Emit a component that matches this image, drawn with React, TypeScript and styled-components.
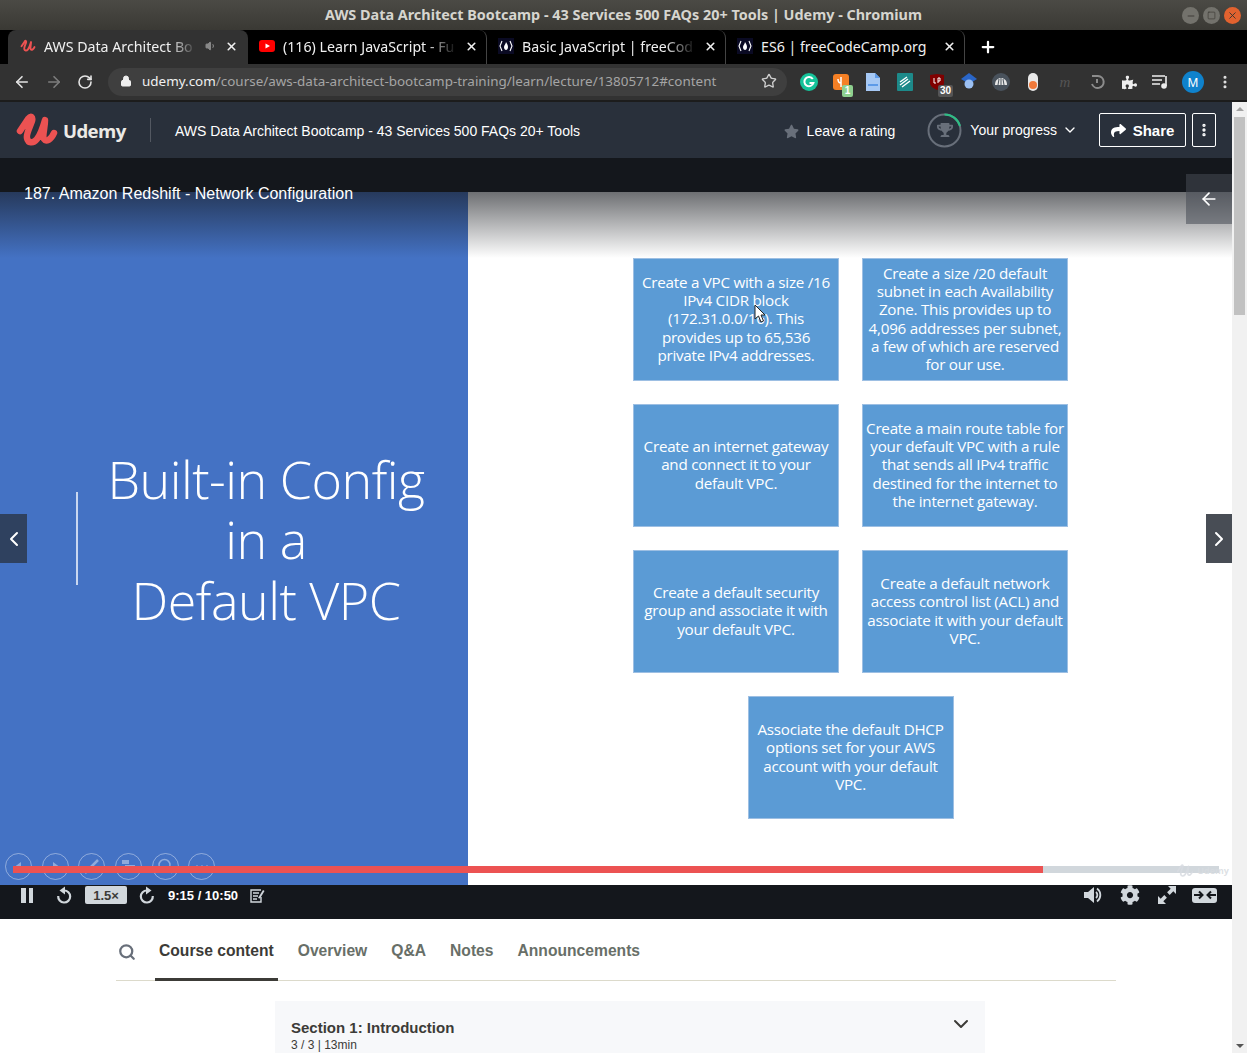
import React from 'react';
import styled, { createGlobalStyle } from 'styled-components';
import {
  ArrowLeft,
  ArrowRight,
  ChevronDown,
  ChevronLeft,
  ChevronRight,
  Lock,
  Minus,
  MoreVertical,
  Plus,
  RotateCw,
  Search,
  Square,
  Star,
  Volume1,
  X,
} from 'lucide-react';
import { FaCog, FaPuzzlePiece, FaShare, FaStar, FaTrophy } from 'react-icons/fa';

const GlobalStyle = createGlobalStyle`
  html, body {
    margin: 0;
    padding: 0;
    height: 1053px;
    overflow: hidden;
    background: #fff;
    font-family: "Liberation Sans", Arial, sans-serif;
  }
  * { box-sizing: border-box; }
`;

const Window = styled.div`
  display: flex;
  flex-direction: column;
  width: 1247px;
  height: 1053px;
  overflow: hidden;
`;

const TitleBar = styled.div`
  position: relative;
  display: flex;
  justify-content: center;
  align-items: center;
  height: 30px;
  flex: none;
  padding-bottom: 2px;
  background: linear-gradient(#4b4a45, #3a3934);
  color: #d6d5cf;
  font: 700 14.4px "Noto Sans", sans-serif;
`;

const WindowButtons = styled.div`
  position: absolute;
  top: 7px;
  right: 6px;
  display: flex;
  gap: 4px;
`;

const WindowButton = styled.div<{ $close?: boolean }>`
  display: flex;
  align-items: center;
  justify-content: center;
  width: 17px;
  height: 17px;
  border-radius: 50%;
  background: ${(p) => (p.$close ? '#e2622f' : '#73726c')};
  color: #35342f;
`;

const TabStrip = styled.div`
  display: flex;
  align-items: stretch;
  height: 34px;
  flex: none;
  padding-left: 8px;
  background: #000;
`;

const Tab = styled.div<{ $active?: boolean; $sep?: boolean }>`
  display: flex;
  align-items: center;
  width: ${(p) => (p.$active ? 240 : 239)}px;
  padding: 0 ${(p) => (p.$active ? 10 : 8)}px 2px ${(p) => (p.$active ? 12 : 11)}px;
  gap: 8px;
  border-radius: 8px 8px 0 0;
  background: ${(p) => (p.$active ? '#323232' : 'transparent')};
  color: #f0f0f0;
  font: 14.2px "Noto Sans", sans-serif;
  ${(p) => p.$sep && 'border-right: 1px solid #444;'}
`;

const TabIcon = styled.span`
  display: flex;
  align-items: center;
  justify-content: center;
  flex: none;
  width: 16px;
  height: 16px;
`;

const TabLabel = styled.span<{ $fade?: boolean }>`
  flex: 1;
  white-space: nowrap;
  ${(p) => p.$fade && 'mask-image: linear-gradient(to right, #000 82%, transparent 100%);'}
`;

const NewTab = styled.div`
  display: flex;
  align-items: center;
  padding-left: 14px;
  color: #fff;
`;

const Toolbar = styled.div`
  display: flex;
  align-items: center;
  height: 36px;
  flex: none;
  padding: 0 0 0 13px;
  background: #323232;
  color: #e4e4e4;
`;

const NavButtons = styled.div`
  display: flex;
  align-items: center;
  gap: 14px;
  width: 95px;
`;

const Omnibox = styled.div`
  display: flex;
  align-items: center;
  width: 679px;
  height: 28px;
  padding: 0 10px 2px 12px;
  border-radius: 14px;
  background: #3f3f3f;
  font: 13.45px "Noto Sans", sans-serif;
  color: #f0f0f0;
`;

const UrlText = styled.div`
  flex: 1;
  margin-left: 10px;
  white-space: nowrap;
  span { color: #a5a5a5; }
`;

const Extensions = styled.div`
  display: flex;
  align-items: center;
  margin-left: 6px;
`;

const Ext = styled.div`
  position: relative;
  display: flex;
  align-items: center;
  justify-content: center;
  width: 32px;
  height: 32px;
`;

const ExtBadge = styled.span<{ $dark?: boolean }>`
  position: absolute;
  right: ${(p) => (p.$dark ? 0 : 4)}px;
  bottom: 1px;
  padding: 0 2px;
  min-width: 11px;
  height: 12px;
  border-radius: 2px;
  background: ${(p) => (p.$dark ? '#555' : '#8ed08f')};
  color: #fff;
  font: 700 10px/12px "Liberation Sans", sans-serif;
  text-align: center;
`;

const DimLetter = styled.span`
  color: #555;
  font: italic 15px "Liberation Serif", serif;
`;

const Avatar = styled.div`
  display: flex;
  align-items: center;
  justify-content: center;
  width: 22px;
  height: 22px;
  border-radius: 50%;
  background: #0f82cc;
  color: #fff;
  font: 12px "Noto Sans", sans-serif;
`;

const Viewport = styled.div`
  display: flex;
  flex: 1;
  min-height: 0;
  border-top: 2px solid #1c1c1c;
`;

const Page = styled.div`
  display: flex;
  flex-direction: column;
  flex: 1;
  min-width: 0;
  background: #fff;
`;

const Scrollbar = styled.div`
  display: flex;
  flex-direction: column;
  align-items: center;
  width: 15px;
  flex: none;
  background: #f1f1f1;
`;

const ScrollArrow = styled.div<{ $down?: boolean }>`
  width: 0;
  height: 0;
  margin: 5px 0;
  border-left: 4px solid transparent;
  border-right: 4px solid transparent;
  ${(p) => (p.$down ? 'border-top: 4px solid #555;' : 'border-bottom: 4px solid #a3a3a3;')}
`;

const ScrollThumb = styled.div`
  width: 11px;
  height: 198px;
  margin-top: 1px;
  background: #c1c1c1;
`;

const ScrollSpace = styled.div`
  flex: 1;
`;

const CourseHeader = styled.header`
  display: flex;
  align-items: center;
  height: 56px;
  flex: none;
  padding: 0 16px;
  background: #29303b;
  color: #fff;
  font-size: 14px;
`;

const LogoLink = styled.div`
  display: flex;
  align-items: center;
  gap: 5px;
  width: 135px;
  height: 24px;
  border-right: 1px solid #535861;
`;

const LogoText = styled.span`
  color: #eceae6;
  font: 700 18.6px "Open Sans", sans-serif;
  letter-spacing: -0.6px;
`;

const CourseTitle = styled.div`
  flex: 1;
  margin: 2px 0 0 24px;
`;

const RatingLink = styled.div`
  display: flex;
  align-items: center;
  gap: 8px;
  margin: 2px 32px 0 0;
`;

const ProgressLink = styled.div`
  display: flex;
  align-items: center;
  gap: 8px;
  margin-right: 21px;
`;

const ProgressRing = styled.div`
  position: relative;
  display: flex;
  align-items: center;
  justify-content: center;
  width: 35px;
  height: 35px;
  color: #686f7a;
  svg.ring { position: absolute; inset: 0; }
`;

const Caret = styled.span`
  display: flex;
  margin-left: -3px;
`;

const OutlineButton = styled.div<{ $square?: boolean }>`
  display: flex;
  align-items: center;
  justify-content: center;
  gap: 7px;
  width: ${(p) => (p.$square ? 24 : 87)}px;
  height: 34px;
  margin-left: ${(p) => (p.$square ? 6 : 0)}px;
  border: 1px solid #fff;
  border-radius: 2px;
  font-weight: 700;
  font-size: 15px;
`;

const VideoTop = styled.div`
  height: 34px;
  flex: none;
  background: #14171c;
`;

const Stage = styled.div`
  position: relative;
  display: grid;
  grid-template-columns: 468px 1fr;
  height: 693px;
  flex: none;
`;

const BluePanel = styled.div`
  display: flex;
  align-items: center;
  padding-left: 76px;
  background: #4472c4;
  color: #fff;
`;

const PanelRule = styled.div`
  flex: none;
  width: 2px;
  height: 93px;
  background: #c9d7f0;
`;

const PanelHeading = styled.div`
  flex: 1;
  margin-top: 2px;
  padding-right: 14px;
  text-align: center;
  white-space: nowrap;
  font: 300 52px/60.5px "Open Sans", sans-serif;
  letter-spacing: -0.5px;
`;

const Boxes = styled.div`
  display: grid;
  grid-template-columns: 206px 206px;
  grid-auto-rows: 123px;
  gap: 23px;
  align-content: start;
  padding: 66px 0 0 165px;
  background: #fff;
`;

const Box = styled.div<{ $wide?: boolean }>`
  display: flex;
  align-items: center;
  justify-content: center;
  padding-bottom: 2px;
  ${(p) => p.$wide && 'grid-column: 1 / span 2; justify-self: center; width: 206px;'}
  border: 1px solid #9dbfe3;
  background: #5b9bd5;
  color: #fff;
  text-align: center;
  white-space: pre-line;
  font: 15.2px/18.3px "Open Sans", sans-serif;
  letter-spacing: -0.25px;
`;

const TopShade = styled.div`
  position: absolute;
  top: 0;
  left: 0;
  right: 0;
  height: 66px;
  padding: 0 24px;
  background: linear-gradient(rgba(20, 23, 28, 0.62), rgba(20, 23, 28, 0));
  color: #fff;
  font-size: 16px;
`;

const LectureTitle = styled.div`
  margin-top: -8px;
  padding-top: 1px;
`;

const BackPanel = styled.div`
  position: absolute;
  top: -18px;
  right: 0;
  display: flex;
  align-items: center;
  justify-content: center;
  width: 46px;
  height: 50px;
  background: rgba(70, 75, 84, 0.55);
  color: #fff;
`;

const SideArrow = styled.div<{ $right?: boolean }>`
  position: absolute;
  top: 322px;
  ${(p) => (p.$right ? 'right: 0; background: #484d55;' : 'left: 0; background: #2f415f;')}
  display: flex;
  align-items: center;
  justify-content: center;
  width: ${(p) => (p.$right ? 26 : 27)}px;
  height: 49px;
  color: #fff;
`;

const SlideControls = styled.div`
  position: absolute;
  left: 5px;
  bottom: 5px;
  display: flex;
  gap: 9.7px;
`;

const SlideControl = styled.div`
  display: flex;
  align-items: center;
  justify-content: center;
  width: 27px;
  height: 27px;
  border: 1px solid rgba(255, 255, 255, 0.4);
  border-radius: 50%;
`;

const Track = styled.div`
  position: absolute;
  left: 13px;
  right: 13px;
  bottom: 12px;
  height: 7px;
  background: #d1d7dc;
`;

const TrackFill = styled.div`
  height: 100%;
  background: #ec5252;
`;

const Watermark = styled.div`
  position: absolute;
  right: 3px;
  bottom: 7px;
  display: flex;
  align-items: center;
  gap: 3px;
  color: rgba(215, 219, 224, 0.85);
  font: 700 9px "Open Sans", sans-serif;
`;

const Cursor = styled.svg`
  position: absolute;
  left: 754px;
  top: 112px;
`;

const ControlBar = styled.div`
  display: flex;
  align-items: center;
  height: 34px;
  flex: none;
  padding: 0 15px 14px 21px;
  background: #14171c;
  color: #d1d7dc;
`;

const PauseBars = styled.div`
  display: flex;
  justify-content: space-between;
  width: 12px;
  height: 15px;
  margin-right: 22px;
  &::before, &::after {
    content: '';
    width: 4.5px;
    background: #d1d7dc;
  }
`;

const RateBox = styled.div`
  display: flex;
  align-items: center;
  justify-content: center;
  width: 42px;
  height: 18px;
  margin: 0 11px 0 12px;
  border-radius: 2px;
  background: #d1d7dc;
  color: #3c3b37;
  font-weight: 700;
  font-size: 13px;
`;

const TimeText = styled.div`
  margin: 0 12px;
  color: #fff;
  font-weight: 700;
  font-size: 13px;
`;

const ControlSpacer = styled.div`
  flex: 1;
`;

const RightControls = styled.div`
  display: flex;
  align-items: center;
  gap: 17px;
`;

const TheatreBox = styled.div`
  display: flex;
  align-items: center;
  justify-content: center;
  width: 25px;
  height: 15px;
  margin-left: -2px;
  border-radius: 3px;
  background: #d1d7dc;
`;

const TabsRow = styled.nav`
  display: flex;
  align-items: stretch;
  height: 62px;
  flex: none;
  margin: 0 116px;
  border-bottom: 1px solid #dcdacb;
`;

const SearchSlot = styled.div`
  display: flex;
  align-items: center;
  width: 39px;
  padding: 4px 0 0 2px;
  color: #686f7a;
`;

const ContentTab = styled.div<{ $active?: boolean }>`
  display: flex;
  align-items: center;
  margin: 0 16px -1px 0;
  padding: 5px 4px 0;
  border-bottom: 3px solid ${(p) => (p.$active ? '#3c3b37' : 'transparent')};
  color: ${(p) => (p.$active ? '#3c3b37' : '#686f68')};
  font-weight: 700;
  font-size: 15.65px;
`;

const SectionCard = styled.section`
  display: flex;
  justify-content: space-between;
  width: 710px;
  height: 60px;
  margin: 20px 0 0 275px;
  padding: 18px 12px 0 16px;
  background: #f7f8fa;
  color: #3c3b37;
`;

const SectionName = styled.div`
  font-weight: 700;
  font-size: 15px;
`;

const SectionMeta = styled.div`
  margin-top: 2px;
  font-size: 12px;
`;

const SectionChevron = styled.div`
  margin-top: -7px;
`;

const FreeCodeCampIcon = () => (
  <svg width="16" height="16" viewBox="0 0 16 16">
    <rect width="16" height="16" fill="#0a0a23" />
    <path d="M4 3 2 8l2 5M12 3l2 5-2 5" fill="none" stroke="#fff" strokeWidth="1.1" />
    <path d="M8 4c1 2 2 3 2 5s-1 3-2 3-2-1-2-3 2-3 2-5z" fill="#fff" />
  </svg>
);

const UdemyMark = ({ size = 16, color = '#ec5252', weight = 6.5 }: { size?: number; color?: string; weight?: number }) => (
  <svg width={size} height={size * 0.86} viewBox="0 0 42 36" fill="none">
    <path
      d="M4 19 12 7C15 3 17 5 16 9 14 15 10 22 11 26 12 31 17 32 21 27 25 22 27 15 29 8 29 16 26 24 28 27 30 30 35 28 38 21"
      stroke={color}
      strokeWidth={weight}
      strokeLinecap="round"
      strokeLinejoin="round"
    />
  </svg>
);

const YouTubeIcon = () => (
  <svg width="16" height="16" viewBox="0 0 16 16">
    <rect y="2" width="16" height="12" rx="3" fill="#f00" />
    <path d="M6.5 5.5v5L11 8z" fill="#fff" />
  </svg>
);

const GrammarlyIcon = () => (
  <svg width="18" height="18" viewBox="0 0 18 18">
    <circle cx="9" cy="9" r="9" fill="#15c39a" />
    <path d="M12.8 6a4.6 4.6 0 1 0 .6 4H9.5" fill="none" stroke="#fff" strokeWidth="2" />
  </svg>
);

const OrangeExtIcon = () => (
  <svg width="16" height="16" viewBox="0 0 16 16">
    <rect width="16" height="16" rx="3" fill="#f58025" />
    <path d="M8 3v10M5 5c0 3 1 4 3 4" fill="none" stroke="#fff" strokeWidth="1.5" />
  </svg>
);

const DocIcon = () => (
  <svg width="14" height="18" viewBox="0 0 14 18">
    <path d="M0 0h9l5 5v13H0z" fill="#a6c8f4" />
    <path d="M9 0l5 5H9z" fill="#5d9ae8" />
    <rect x="2" y="11" width="10" height="2" fill="#5d9ae8" />
  </svg>
);

const StackIcon = () => (
  <svg width="16" height="18" viewBox="0 0 16 18">
    <rect width="16" height="18" rx="1" fill="#1d8a8a" />
    <path d="M3 9l7-5M3 12l8-6M5 14l8-6" stroke="#fff" strokeWidth="1.4" />
  </svg>
);

const ShieldIcon = () => (
  <svg width="14" height="16" viewBox="0 0 14 16">
    <path d="M0 1 7 0l7 1v8c0 3-3 5-7 7-4-2-7-4-7-7z" fill="#800000" />
    <path d="M4 4v5h2M8 9V4h2v3H8" fill="none" stroke="#fff" />
  </svg>
);

const CapIcon = () => (
  <svg width="16" height="18" viewBox="0 0 16 18">
    <path d="M8 0l8 6-8 5-8-5z" fill="#2a66c8" />
    <circle cx="8" cy="11" r="4.5" fill="#9cc0f2" />
  </svg>
);

const CloudIcon = () => (
  <svg width="18" height="18" viewBox="0 0 18 18">
    <circle cx="9" cy="9" r="9" fill="#49525c" />
    <path d="M3 12c0-5 3-7 6-7s6 2 6 7z" fill="#e6e6e6" />
    <path d="M6 12 7 6M9 12V5M12 12l-1-6" stroke="#49525c" />
  </svg>
);

const ToggleIcon = () => (
  <svg width="10" height="18" viewBox="0 0 10 18">
    <rect width="10" height="18" rx="5" fill="#e8e8e8" />
    <circle cx="5" cy="12" r="4" fill="#f0793a" />
  </svg>
);

const HistoryIcon = () => (
  <svg width="16" height="16" viewBox="0 0 16 16" fill="none" stroke="#8c8c8c" strokeWidth="2">
    <path d="M3 2h6a6 6 0 1 1-6 8" />
    <path d="M8 5v4" />
  </svg>
);

const MusicListIcon = () => (
  <svg width="18" height="14" viewBox="0 0 18 14" fill="none" stroke="#eee" strokeWidth="1.6">
    <path d="M0 1h13M0 5h10M0 9h8M14 1v10" />
    <circle cx="12" cy="11" r="2" fill="#eee" />
  </svg>
);

const NoteIcon = () => (
  <svg width="15" height="15" viewBox="0 0 15 15" fill="none" stroke="#d1d7dc" strokeWidth="1.4">
    <path d="M11 9v5H1V2h10" />
    <path d="M3 5h6M3 8h5M3 11h4" />
    <path d="M8 10l5-8 1.5 1-4.5 7.5z" fill="#d1d7dc" stroke="none" />
  </svg>
);

const SeekIcon = ({ forward }: { forward?: boolean }) => (
  <svg width="18" height="18" viewBox="0 0 18 18" style={forward ? { transform: 'scaleX(-1)' } : undefined}>
    <path d="M9 4.5A6 6 0 1 1 3.2 10" fill="none" stroke="#d1d7dc" strokeWidth="2.2" />
    <path d="M10 0.5v8L4.5 4.5z" fill="#d1d7dc" />
  </svg>
);

const SpeakerIcon = () => (
  <svg width="20" height="20" viewBox="0 0 20 20" fill="none" stroke="#d1d7dc" strokeWidth="1.8">
    <path d="M1 7h4l6-5v16l-6-5H1z" fill="#d1d7dc" stroke="none" />
    <path d="M13 7a4 4 0 0 1 0 6M14 3.5a8 8 0 0 1 0 13" />
  </svg>
);

const ExpandIcon = () => (
  <svg width="20" height="20" viewBox="0 0 20 20" fill="#d1d7dc">
    <path d="M1 19v-8l2.7 2.7 3.6-3.6 2.6 2.6-3.6 3.6L9 19z" />
    <path d="M19 1v8l-2.7-2.7-3.6 3.6-2.6-2.6 3.6-3.6L11 1z" />
  </svg>
);

const TheatreIcon = () => (
  <svg width="22" height="10" viewBox="0 0 22 10" fill="none" stroke="#14171c" strokeWidth="2">
    <path d="M0 5h8.5M5 1.5 8.5 5 5 8.5M22 5h-8.5M17 1.5 13.5 5 17 8.5" />
  </svg>
);

const ControlGlyph = ({ children }: { children: React.ReactNode }) => (
  <svg width="17" height="17" viewBox="0 0 17 17" fill="rgba(255,255,255,0.4)" stroke="rgba(255,255,255,0.4)">
    {children}
  </svg>
);

const slideControlGlyphs = [
  <path key="prev" d="M11 4v9L5 8.500z" stroke="none" />,
  <path key="next" d="M6 4v9l6-4.500z" stroke="none" />,
  <path key="pen" d="M2 15 15 2" strokeWidth="2.500" />,
  <path key="cards" d="M2 2h7v4H2zM5 7h10v3H5zM5 12h10v3H5z" stroke="none" />,
  <g key="find" fill="none" strokeWidth="1.500">
    <circle cx="7.500" cy="7" r="5.500" />
    <path d="M11.500 11 15 15" />
  </g>,
  <path key="more" d="M3 8.500h2M8 8.500h2M13 8.500h2" strokeWidth="2" />,
];

const slideBoxes = [
  'Create a VPC with a size /16\nIPv4 CIDR block\n(172.31.0.0/16). This\nprovides up to 65,536\nprivate IPv4 addresses.',
  'Create a size /20 default\nsubnet in each Availability\nZone. This provides up to\n4,096 addresses per subnet,\na few of which are reserved\nfor our use.',
  'Create an internet gateway\nand connect it to your\ndefault VPC.',
  'Create a main route table for\nyour default VPC with a rule\nthat sends all IPv4 traffic\ndestined for the internet to\nthe internet gateway.',
  'Create a default security\ngroup and associate it with\nyour default VPC.',
  'Create a default network\naccess control list (ACL) and\nassociate it with your default\nVPC.',
];

const browserTabs = [
  { label: '(116) Learn JavaScript - Fu', icon: <YouTubeIcon />, fade: true },
  { label: 'Basic JavaScript | freeCod', icon: <FreeCodeCampIcon />, fade: true },
  { label: 'ES6 | freeCodeCamp.org', icon: <FreeCodeCampIcon />, fade: false },
];

const contentTabs = ['Overview', 'Q&A', 'Notes', 'Announcements'];

const elapsed = 555;
const duration = 650;

function App() {
  return (
    <Window>
      <GlobalStyle />
      <TitleBar>
        AWS Data Architect Bootcamp - 43 Services 500 FAQs 20+ Tools | Udemy - Chromium
        <WindowButtons>
          <WindowButton><Minus size={10} strokeWidth={2} /></WindowButton>
          <WindowButton><Square size={9} strokeWidth={1.6} /></WindowButton>
          <WindowButton $close><X size={11} strokeWidth={2} /></WindowButton>
        </WindowButtons>
      </TitleBar>

      <TabStrip>
        <Tab $active>
          <TabIcon><UdemyMark weight={5} /></TabIcon>
          <TabLabel $fade>AWS Data Architect Bo</TabLabel>
          <Volume1 size={12} color="#888" fill="#888" />
          <X size={13} strokeWidth={3} />
        </Tab>
        {browserTabs.map((t) => (
          <Tab key={t.label} $sep>
            <TabIcon>{t.icon}</TabIcon>
            <TabLabel $fade={t.fade}>{t.label}</TabLabel>
            <X size={13} strokeWidth={3} />
          </Tab>
        ))}
        <NewTab><Plus size={18} strokeWidth={3} /></NewTab>
      </TabStrip>

      <Toolbar>
        <NavButtons>
          <ArrowLeft size={18} strokeWidth={2.2} />
          <ArrowRight size={18} strokeWidth={2.2} color="#7d7d7d" />
          <RotateCw size={16} strokeWidth={2.4} />
        </NavButtons>
        <Omnibox>
          <Lock size={12} fill="#eee" />
          <UrlText>
            udemy.com<span>/course/aws-data-architect-bootcamp-training/learn/lecture/13805712#content</span>
          </UrlText>
          <Star size={16} color="#cfcfcf" />
        </Omnibox>
        <Extensions>
          <Ext><GrammarlyIcon /></Ext>
          <Ext><OrangeExtIcon /><ExtBadge>1</ExtBadge></Ext>
          <Ext><DocIcon /></Ext>
          <Ext><StackIcon /></Ext>
          <Ext><ShieldIcon /><ExtBadge $dark>30</ExtBadge></Ext>
          <Ext><CapIcon /></Ext>
          <Ext><CloudIcon /></Ext>
          <Ext><ToggleIcon /></Ext>
          <Ext><DimLetter>m</DimLetter></Ext>
          <Ext><HistoryIcon /></Ext>
          <Ext><FaPuzzlePiece size={15} color="#eee" /></Ext>
          <Ext><MusicListIcon /></Ext>
          <Ext><Avatar>M</Avatar></Ext>
          <Ext><MoreVertical size={16} strokeWidth={2.6} /></Ext>
        </Extensions>
      </Toolbar>

      <Viewport>
        <Page>
          <CourseHeader>
            <LogoLink>
              <UdemyMark size={42} />
              <LogoText>Udemy</LogoText>
            </LogoLink>
            <CourseTitle>AWS Data Architect Bootcamp - 43 Services 500 FAQs 20+ Tools</CourseTitle>
            <RatingLink>
              <FaStar size={15} color="#686f7a" />
              Leave a rating
            </RatingLink>
            <ProgressLink>
              <ProgressRing>
                <svg className="ring" width="35" height="35" viewBox="0 0 35 35" fill="none" strokeWidth="2">
                  <circle cx="17.5" cy="17.5" r="16" stroke="#686f7a" />
                  <path d="M17.5 1.5A16 16 0 0 1 33 13" stroke="#2ebd85" />
                </svg>
                <FaTrophy size={16} />
              </ProgressRing>
              Your progress
              <Caret><ChevronDown size={16} /></Caret>
            </ProgressLink>
            <OutlineButton>
              <FaShare size={15} />
              Share
            </OutlineButton>
            <OutlineButton $square>
              <MoreVertical size={16} strokeWidth={3} />
            </OutlineButton>
          </CourseHeader>

          <VideoTop />

          <Stage>
            <BluePanel>
              <PanelRule />
              <PanelHeading>
                Built-in Config
                <br />
                in a
                <br />
                Default VPC
              </PanelHeading>
            </BluePanel>
            <Boxes>
              {slideBoxes.map((text) => (
                <Box key={text}>{text}</Box>
              ))}
              <Box $wide>{'Associate the default DHCP\noptions set for your AWS\naccount with your default\nVPC.'}</Box>
            </Boxes>

            <TopShade>
              <LectureTitle>187. Amazon Redshift - Network Configuration</LectureTitle>
            </TopShade>
            <BackPanel><ArrowLeft size={20} strokeWidth={2} /></BackPanel>
            <SideArrow><ChevronLeft size={24} strokeWidth={2} /></SideArrow>
            <SideArrow $right><ChevronRight size={24} strokeWidth={2} /></SideArrow>
            <SlideControls>
              {slideControlGlyphs.map((glyph) => (
                <SlideControl key={glyph.key}>
                  <ControlGlyph>{glyph}</ControlGlyph>
                </SlideControl>
              ))}
            </SlideControls>
            <Track>
              <TrackFill style={{ width: `${(elapsed / duration) * 100}%` }} />
            </Track>
            <Watermark>
              <UdemyMark size={18} color="rgba(215,219,224,0.85)" weight={4} />
              Udemy
            </Watermark>
            <Cursor width="12" height="19" viewBox="0 0 12 19">
              <path d="M1 1v14l3.5-3 2.5 6 2.5-1-2.5-6H11z" fill="#fff" stroke="#222" />
            </Cursor>
          </Stage>

          <ControlBar>
            <PauseBars />
            <SeekIcon />
            <RateBox>1.5×</RateBox>
            <SeekIcon forward />
            <TimeText>9:15 / 10:50</TimeText>
            <NoteIcon />
            <ControlSpacer />
            <RightControls>
              <SpeakerIcon />
              <FaCog size={20} />
              <ExpandIcon />
              <TheatreBox><TheatreIcon /></TheatreBox>
            </RightControls>
          </ControlBar>

          <TabsRow>
            <SearchSlot><Search size={18} strokeWidth={3} /></SearchSlot>
            <ContentTab $active>Course content</ContentTab>
            {contentTabs.map((t) => (
              <ContentTab key={t}>{t}</ContentTab>
            ))}
          </TabsRow>

          <SectionCard>
            <div>
              <SectionName>Section 1: Introduction</SectionName>
              <SectionMeta>3 / 3 | 13min</SectionMeta>
            </div>
            <SectionChevron><ChevronDown size={24} strokeWidth={2} /></SectionChevron>
          </SectionCard>
        </Page>
        <Scrollbar>
          <ScrollArrow />
          <ScrollThumb />
          <ScrollSpace />
          <ScrollArrow $down />
        </Scrollbar>
      </Viewport>
    </Window>
  );
}

export default App;
